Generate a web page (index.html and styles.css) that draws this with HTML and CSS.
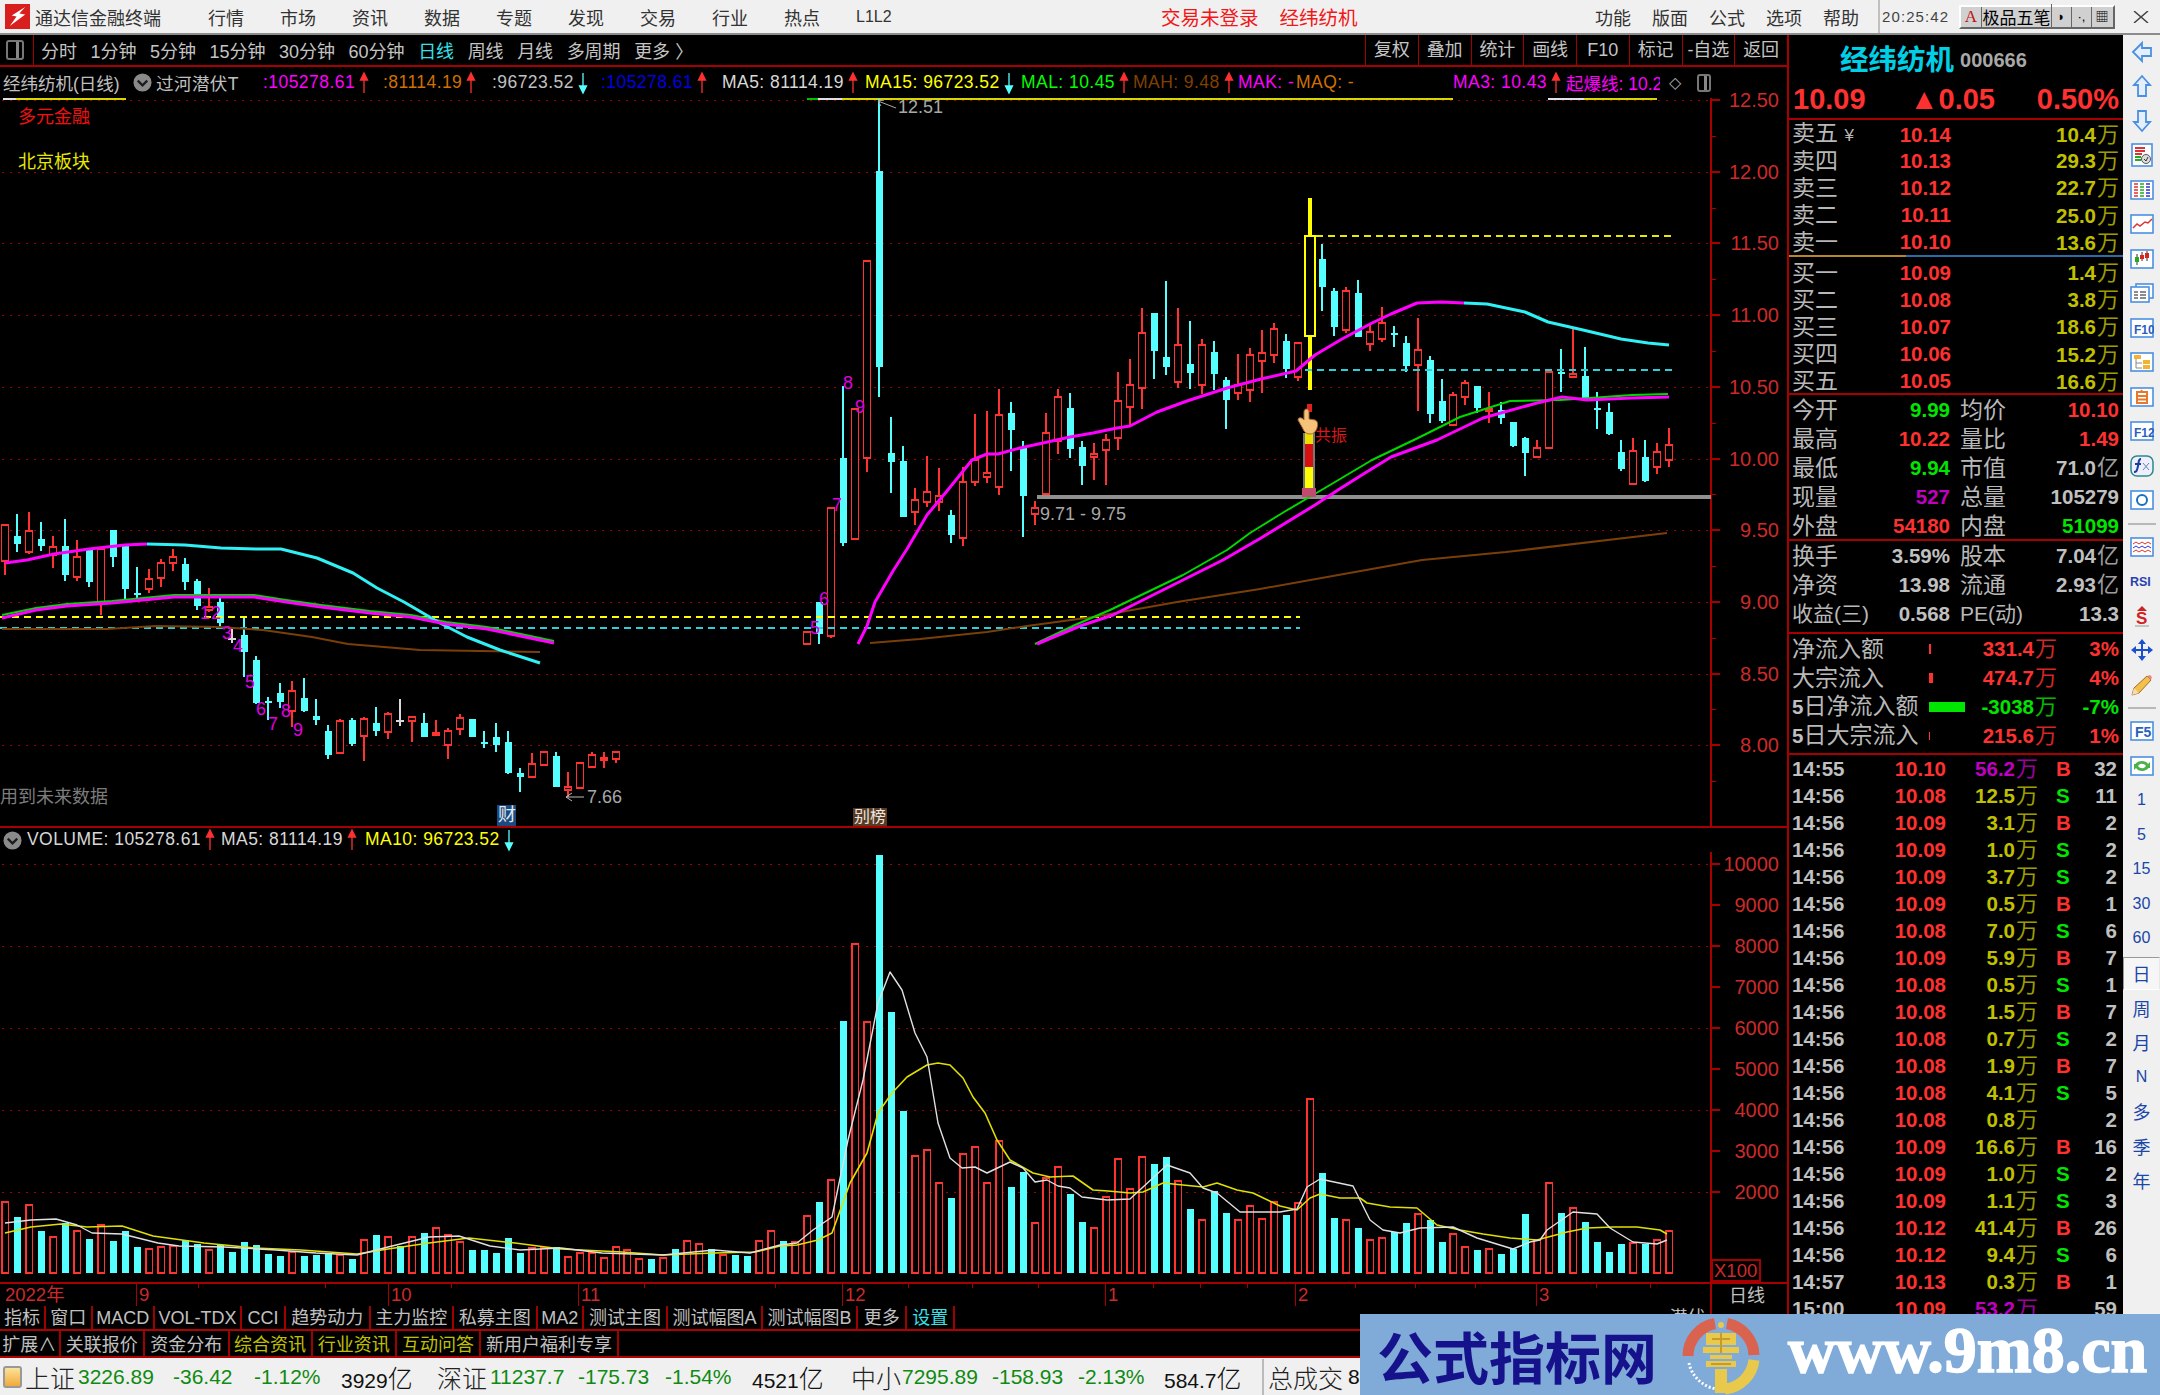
FILE: index.html
```html
<!DOCTYPE html>
<html lang="zh">
<head>
<meta charset="utf-8">
<title>通达信金融终端</title>
<link rel="stylesheet" href="styles.css">
</head>
<body>
<svg class="defs" width="0" height="0">
  <symbol id="up" viewBox="0 0 10 22"><path d="M5 21V3M1.5 8L5 1l3.500 7z" stroke="#ff3030" stroke-width="1.300" fill="#ff3030"/></symbol>
  <symbol id="down" viewBox="0 0 10 22"><path d="M5 1v18M1.500 14L5 21l3.500-7z" stroke="#55ffff" stroke-width="1.300" fill="#55ffff"/></symbol>
  <symbol id="chev" viewBox="0 0 20 20"><circle cx="10" cy="10" r="9.500" fill="#8a8a8a"/><path d="M5 8l5 5 5-5" fill="none" stroke="#1c1c1c" stroke-width="2.400"/></symbol>
</svg>
<div class="app">
  <header class="titlebar">
    <div class="tl-left">
      <svg class="logo" viewBox="0 0 26 26"><rect width="26" height="26" fill="#d91e1e"/><path d="M21 3L7 12l5 1-7 10 16-12-6-1z" fill="#fff"/></svg>
      <span class="brand">通达信金融终端</span>
      <nav class="menu"><span>行情</span><span>市场</span><span>资讯</span><span>数据</span><span>专题</span><span>发现</span><span>交易</span><span>行业</span><span>热点</span><span class="l2">L1L2</span></nav>
    </div>
    <div class="tl-red"><span>交易未登录</span><span>经纬纺机</span></div>
    <nav class="tl-right"><span>功能</span><span>版面</span><span>公式</span><span>选项</span><span>帮助</span></nav>
    <div class="clock">20:25:42</div>
    <div class="ime"><b class="ime-a">A</b><span class="ime-name">极品五笔</span><span class="ime-k">◗</span><span class="ime-k">·,</span><span class="ime-k kb">▦</span></div>
    <svg class="close" viewBox="0 0 16 12"><path d="M1 0l14 12M15 0L1 12" stroke="#444" stroke-width="1.500"/></svg>
  </header>

  <main class="body">
    <section class="left">
      <div class="toolbar">
        <div class="tb-icon"><i></i></div>
        <div class="periods"><span>分时</span><span>1分钟</span><span>5分钟</span><span>15分钟</span><span>30分钟</span><span>60分钟</span><span class="on">日线</span><span>周线</span><span>月线</span><span>多周期</span><span>更多 〉</span></div>
        <div class="tb-btns"><span>复权</span><span>叠加</span><span>统计</span><span>画线</span><span>F10</span><span>标记</span><span>-自选</span><span>返回</span></div>
      </div>
      <div class="legend">
        <span class="gy">经纬纺机(日线)</span>
        <svg class="chev"><use href="#chev"/></svg>
        <span class="gy">过河潜伏T</span>
        <span class="mg">:105278.61<svg class="ar"><use href="#up"/></svg></span>
        <span class="or">:81114.19<svg class="ar"><use href="#up"/></svg></span>
        <span class="gy">:96723.52<svg class="ar"><use href="#down"/></svg></span>
        <span class="bl">:105278.61<svg class="ar"><use href="#up"/></svg></span>
        <span class="wh">MA5: 81114.19<svg class="ar"><use href="#up"/></svg></span>
        <span class="ye">MA15: 96723.52<svg class="ar"><use href="#down"/></svg></span>
        <span class="gr">MAL: 10.45<svg class="ar"><use href="#up"/></svg></span>
        <span class="br">MAH: 9.48<svg class="ar"><use href="#up"/></svg></span>
        <span class="mg">MAK: -</span>
        <span class="or">MAQ: -</span>
        <span class="mg">MA3: 10.43<svg class="ar"><use href="#up"/></svg></span>
        <span class="mg clip">起爆线: 10.2</span>
        <span class="diamond">◇</span>
        <span class="tb-icon small"><i></i></span>
      </div>
      <svg id="price" class="pane pane-price" viewBox="0 98 1787 728"></svg>
      <div class="legend vol-legend">
        <svg class="chev"><use href="#chev"/></svg>
        <span class="wh">VOLUME: 105278.61<svg class="ar"><use href="#up"/></svg></span>
        <span class="wh">MA5: 81114.19<svg class="ar"><use href="#up"/></svg></span>
        <span class="ye">MA10: 96723.52<svg class="ar"><use href="#down"/></svg></span>
        <span></span>
      </div>
      <svg id="vol" class="pane pane-vol" viewBox="0 852 1787 430"></svg>
      <svg id="dates" class="pane pane-dates" viewBox="0 1282 1787 24"></svg>
      <div class="tabs tabs-a">
        <span>指标</span><span>窗口</span><span>MACD</span><span>VOL-TDX</span><span>CCI</span><span>趋势动力</span><span>主力监控</span><span>私募主图</span><span>MA2</span><span>测试主图</span><span>测试幅图A</span><span>测试幅图B</span><span>更多</span><span class="cy">设置</span><span class="blank"></span><span>潜伏</span><span class="blank"></span>
      </div>
      <div class="tabs tabs-b">
        <span>扩展∧</span><span>关联报价</span><span>资金分布</span><span class="ol">综合资讯</span><span class="ol">行业资讯</span><span class="ol">互动问答</span><span>新用户福利专享</span><span class="blank"></span>
      </div>
    </section>

    <aside class="panel">
      <div class="p-head"><span class="p-name">经纬纺机</span><span class="p-code">000666</span></div>
      <div class="p-price"><span>10.09</span><span class="tr">▲0.05</span><span class="tr">0.50%</span></div>
      <div class="book">
        <div class="row"><span class="lb">卖五 <small>¥</small></span><b class="re">10.14</b><b class="ol">10.4<i>万</i></b></div>
        <div class="row"><span class="lb">卖四</span><b class="re">10.13</b><b class="ol">29.3<i>万</i></b></div>
        <div class="row"><span class="lb">卖三</span><b class="re">10.12</b><b class="ol">22.7<i>万</i></b></div>
        <div class="row"><span class="lb">卖二</span><b class="re">10.11</b><b class="ol">25.0<i>万</i></b></div>
        <div class="row"><span class="lb">卖一</span><b class="re">10.10</b><b class="ol">13.6<i>万</i></b></div>
      </div>
      <div class="split"></div>
      <div class="book buy">
        <div class="row"><span class="lb">买一</span><b class="re">10.09</b><b class="ol">1.4<i>万</i></b></div>
        <div class="row"><span class="lb">买二</span><b class="re">10.08</b><b class="ol">3.8<i>万</i></b></div>
        <div class="row"><span class="lb">买三</span><b class="re">10.07</b><b class="ol">18.6<i>万</i></b></div>
        <div class="row"><span class="lb">买四</span><b class="re">10.06</b><b class="ol">15.2<i>万</i></b></div>
        <div class="row"><span class="lb">买五</span><b class="re">10.05</b><b class="ol">16.6<i>万</i></b></div>
      </div>
      <div class="info">
        <div class="irow"><span class="lb">今开</span><b class="gn">9.99</b><span class="lb">均价</span><b class="re">10.10</b></div>
        <div class="irow"><span class="lb">最高</span><b class="re">10.22</b><span class="lb">量比</span><b class="re">1.49</b></div>
        <div class="irow"><span class="lb">最低</span><b class="gn">9.94</b><span class="lb">市值</span><b class="gy">71.0<i>亿</i></b></div>
        <div class="irow"><span class="lb">现量</span><b class="pu">527</b><span class="lb">总量</span><b class="gy">105279</b></div>
        <div class="irow"><span class="lb">外盘</span><b class="re">54180</b><span class="lb">内盘</span><b class="gn">51099</b></div>
      </div>
      <div class="info info-b">
        <div class="irow"><span class="lb">换手</span><b class="gy">3.59%</b><span class="lb">股本</span><b class="gy">7.04<i>亿</i></b></div>
        <div class="irow"><span class="lb">净资</span><b class="gy">13.98</b><span class="lb">流通</span><b class="gy">2.93<i>亿</i></b></div>
        <div class="irow"><span class="lb lb-sm">收益(三)</span><b class="gy">0.568</b><span class="lb lb-sm">PE(动)</span><b class="gy">13.3</b></div>
      </div>
      <div class="flow">
        <div class="frow"><span class="lb">净流入额</span><em class="bar red w2"></em><b class="re">331.4<i>万</i></b><b class="re">3%</b></div>
        <div class="frow"><span class="lb">大宗流入</span><em class="bar red w4"></em><b class="re">474.7<i>万</i></b><b class="re">4%</b></div>
        <div class="frow"><span class="lb"><b class="gy">5</b>日净流入额</span><em class="bar green w36"></em><b class="gn">-3038<i>万</i></b><b class="gn">-7%</b></div>
        <div class="frow"><span class="lb"><b class="gy">5</b>日大宗流入</span><em class="bar red w1"></em><b class="re">215.6<i>万</i></b><b class="re">1%</b></div>
      </div>
      <div class="ticks">
        <div class="tk"><b>14:55</b><b class="re">10.10</b><b class="pu">56.2<i>万</i></b><b class="re">B</b><b>32</b></div>
        <div class="tk"><b>14:56</b><b class="re">10.08</b><b class="ol">12.5<i>万</i></b><b class="gn">S</b><b>11</b></div>
        <div class="tk"><b>14:56</b><b class="re">10.09</b><b class="ol">3.1<i>万</i></b><b class="re">B</b><b>2</b></div>
        <div class="tk"><b>14:56</b><b class="re">10.09</b><b class="ol">1.0<i>万</i></b><b class="gn">S</b><b>2</b></div>
        <div class="tk"><b>14:56</b><b class="re">10.09</b><b class="ol">3.7<i>万</i></b><b class="gn">S</b><b>2</b></div>
        <div class="tk"><b>14:56</b><b class="re">10.09</b><b class="ol">0.5<i>万</i></b><b class="re">B</b><b>1</b></div>
        <div class="tk"><b>14:56</b><b class="re">10.08</b><b class="ol">7.0<i>万</i></b><b class="gn">S</b><b>6</b></div>
        <div class="tk"><b>14:56</b><b class="re">10.09</b><b class="ol">5.9<i>万</i></b><b class="re">B</b><b>7</b></div>
        <div class="tk"><b>14:56</b><b class="re">10.08</b><b class="ol">0.5<i>万</i></b><b class="gn">S</b><b>1</b></div>
        <div class="tk"><b>14:56</b><b class="re">10.08</b><b class="ol">1.5<i>万</i></b><b class="re">B</b><b>7</b></div>
        <div class="tk"><b>14:56</b><b class="re">10.08</b><b class="ol">0.7<i>万</i></b><b class="gn">S</b><b>2</b></div>
        <div class="tk"><b>14:56</b><b class="re">10.08</b><b class="ol">1.9<i>万</i></b><b class="re">B</b><b>7</b></div>
        <div class="tk"><b>14:56</b><b class="re">10.08</b><b class="ol">4.1<i>万</i></b><b class="gn">S</b><b>5</b></div>
        <div class="tk"><b>14:56</b><b class="re">10.08</b><b class="ol">0.8<i>万</i></b><b></b><b>2</b></div>
        <div class="tk"><b>14:56</b><b class="re">10.09</b><b class="ol">16.6<i>万</i></b><b class="re">B</b><b>16</b></div>
        <div class="tk"><b>14:56</b><b class="re">10.09</b><b class="ol">1.0<i>万</i></b><b class="gn">S</b><b>2</b></div>
        <div class="tk"><b>14:56</b><b class="re">10.09</b><b class="ol">1.1<i>万</i></b><b class="gn">S</b><b>3</b></div>
        <div class="tk"><b>14:56</b><b class="re">10.12</b><b class="ol">41.4<i>万</i></b><b class="re">B</b><b>26</b></div>
        <div class="tk"><b>14:56</b><b class="re">10.12</b><b class="ol">9.4<i>万</i></b><b class="gn">S</b><b>6</b></div>
        <div class="tk"><b>14:57</b><b class="re">10.13</b><b class="ol">0.3<i>万</i></b><b class="re">B</b><b>1</b></div>
        <div class="tk"><b>15:00</b><b class="re">10.09</b><b class="pu">53.2<i>万</i></b><b></b><b>59</b></div>
      </div>
    </aside>

    <nav class="side">
      <span class="si"><svg viewBox="0 0 24 24"><path d="M3 12l9-9v5h9v8h-9v5z" class="arw"/></svg></span>
      <span class="si"><svg viewBox="0 0 24 24"><path d="M12 2l8 9h-4v11H8V11H4z" class="arw"/></svg></span>
      <span class="si"><svg viewBox="0 0 24 24"><path d="M12 22l8-9h-4V2H8v11H4z" class="arw"/></svg></span>
      <span class="si"><svg viewBox="0 0 24 24"><rect x="2" y="1" width="20" height="22" class="fr"/><path d="M5 5h10M5 8h10M5 11h7" stroke="#d33" stroke-width="2"/><path d="M5 14h6M5 17h6" stroke="#2a2" stroke-width="2"/><circle cx="16" cy="16" r="4.500" fill="#ddd" stroke="#555"/><path d="M14 16l2 2 2-4" fill="none" stroke="#333"/></svg></span>
      <span class="si"><svg viewBox="0 0 24 24"><rect x="1" y="3" width="22" height="18" class="fr"/><path d="M4 6h4M4 9h4M4 12h4M4 15h4M4 18h4" stroke="#d33" stroke-width="1.500"/><path d="M10 6h4M10 9h4M10 12h4M10 15h4M10 18h4" stroke="#2a2" stroke-width="1.500"/><path d="M16 6h4M16 9h4M16 12h4M16 15h4M16 18h4" stroke="#33c" stroke-width="1.500"/></svg></span>
      <span class="si"><svg viewBox="0 0 24 24"><rect x="1" y="3" width="22" height="18" class="fr"/><path d="M3 16l4-4 3 2 5-4 3 1 4-4" fill="none" stroke="#d33" stroke-width="1.500"/></svg></span>
      <span class="si"><svg viewBox="0 0 24 24"><rect x="1" y="3" width="22" height="18" class="fr"/><path d="M7 7v11M12 5v9M17 4v10" stroke="#333"/><rect x="5" y="10" width="4" height="5" fill="#2a2"/><rect x="10" y="8" width="4" height="4" fill="#d22"/><rect x="15" y="6" width="4" height="5" fill="#d22"/></svg></span>
      <span class="si"><svg viewBox="0 0 24 24"><rect x="6" y="3" width="17" height="14" class="fr"/><rect x="1" y="6" width="18" height="15" class="fr"/><path d="M4 11h4M10 11h6M4 14h4M10 14h6M4 17h4M10 17h6" stroke="#666" stroke-width="1.500"/></svg></span>
      <span class="si"><svg viewBox="0 0 24 24"><rect x="1" y="3" width="22" height="18" class="fr"/><text x="4" y="17.500" class="ict">F10</text></svg></span>
      <span class="si"><svg viewBox="0 0 24 24"><rect x="1" y="3" width="22" height="18" class="fr"/><path d="M6 8v10h6M6 13h6" fill="none" stroke="#888"/><rect x="4" y="5" width="7" height="4" fill="#f2b233"/><rect x="13" y="10" width="7" height="4" fill="#f2b233"/><rect x="13" y="15" width="7" height="4" fill="#f2b233"/></svg></span>
      <span class="si"><svg viewBox="0 0 24 24"><rect x="1" y="3" width="22" height="18" class="fr"/><path d="M7 7h10v11H7zM7 11h10M7 14.500h10M11 7l1-2" fill="none" stroke="#e8782a" stroke-width="2"/></svg></span>
      <span class="si"><svg viewBox="0 0 24 24"><rect x="1" y="3" width="22" height="18" class="fr"/><text x="4" y="17.500" class="ict">F12</text></svg></span>
      <span class="si"><svg viewBox="0 0 24 24"><rect x="1" y="2" width="22" height="20" rx="6" fill="#eef" stroke="#2a8a8a" stroke-width="1.500"/><path d="M11 5c-3 0-2 3-3 7s-1 6-4 6M5 10h6" fill="none" stroke="#1a3fa0" stroke-width="2"/><path d="M13 9l6 7M19 9l-6 7" stroke="#68a" /></svg></span>
      <span class="si"><svg viewBox="0 0 24 24"><rect x="1" y="3" width="22" height="18" class="fr"/><circle cx="12" cy="12" r="5" fill="none" stroke="#1a6fc0" stroke-width="2"/></svg></span>
      <span class="sep"></span>
      <span class="si"><svg viewBox="0 0 24 24"><rect x="1" y="3" width="22" height="18" class="fr"/><path d="M3 9l3-2 3 2 3-2 3 2 3-2 3 2" fill="none" stroke="#d33"/><path d="M3 13l3-2 3 2 3-2 3 2 3-2 3 2" fill="none" stroke="#33c"/><path d="M3 17l3-2 3 2 3-2 3 2 3-2 3 2" fill="none" stroke="#d33"/></svg></span>
      <span class="si"><svg viewBox="0 0 24 24"><text x="0" y="17" class="rsi">RSI</text></svg></span>
      <span class="si"><svg viewBox="0 0 24 24"><path d="M12 2l5 5H7z" fill="#c22"/><text x="6" y="20" class="dollar">S</text><path d="M5 22h14" stroke="#999"/></svg></span>
      <span class="si"><svg viewBox="0 0 24 24"><path d="M12 1l4 5h-3v5h5V8l5 4-5 4v-3h-5v5h3l-4 5-4-5h3v-5H6v3l-5-4 5-4v3h5V6H8z" fill="#1a4fd0"/></svg></span>
      <span class="si"><svg viewBox="0 0 24 24"><path d="M2 22l2-7L17 3l4 4L9 20z" fill="#f2c14a" stroke="#a06a2a"/><path d="M17 3l4 4 1-3-2-2z" fill="#e88"/><path d="M2 22l2-7 5 5z" fill="#f5dcb0"/></svg></span>
      <span class="sep"></span>
      <span class="si"><svg viewBox="0 0 24 24"><rect x="1" y="3" width="22" height="18" class="fr"/><text x="5" y="17.500" class="ict wide">F5</text></svg></span>
      <span class="si"><svg viewBox="0 0 24 24"><rect x="1" y="3" width="22" height="18" class="fr"/><path d="M5 11c1-4 10-6 13-1l2-2v6h-6l2-2c-2-3-7-3-9 0zM19 13c-1 4-10 6-13 1l-2 2v-6h6l-2 2c2 3 7 3 9 0z" fill="#4bb24b"/></svg></span>
      <span class="st">1</span><span class="st">5</span><span class="st">15</span><span class="st">30</span><span class="st">60</span>
      <span class="st cn sel">日</span><span class="st cn">周</span><span class="st cn">月</span><span class="st">N</span><span class="st cn">多</span><span class="st cn">季</span><span class="st cn">年</span>
    </nav>
  </main>

  <footer class="status">
    <i class="st-ico"></i>
    <span class="cn">上证</span><span class="g">3226.89</span><span class="g">-36.42</span><span class="g">-1.12%</span><span class="k">3929<u>亿</u></span>
    <span class="cn">深证</span><span class="g">11237.7</span><span class="g">-175.73</span><span class="g">-1.54%</span><span class="k">4521<u>亿</u></span>
    <span class="cn">中小</span><span class="g">7295.89</span><span class="g">-158.93</span><span class="g">-2.13%</span><span class="k">584.7<u>亿</u></span>
    <span class="cn total">总成交</span><span class="k">8</span>
  </footer>

  <div class="watermark">
    <span class="wm-cn">公式指标网</span>
    <svg class="wm-logo" viewBox="0 0 80 80">
      <path d="M7 41A33 33 0 0 1 34 8.500" fill="none" stroke="#d9634f" stroke-width="11"/>
      <path d="M46 8.500A33 33 0 0 1 73 40" fill="none" stroke="#d9634f" stroke-width="11"/>
      <path d="M73 45A33 33 0 0 1 44 74" fill="none" stroke="#e9c94c" stroke-width="11"/>
      <path d="M8 48A33 33 0 0 0 36 74" fill="none" stroke="#fff" stroke-width="3" stroke-dasharray="2 2"/>
      <circle cx="40" cy="10" r="3" fill="#e9c94c"/>
      <path d="M25 18h30v12H25zM22 32h36v6H22zM29 40h22v4H29zM25 46h30v6H25zM34 54h12v24H34z" fill="#e9c94c"/>
      <path d="M31 24h18M40 18v20M30 49h20" stroke="#c79a2a" stroke-width="2"/>
    </svg>
    <span class="wm-url">www.9m8.cn</span>
  </div>
</div>
<script src="chart.js"></script>
</body>
</html>
```
FILE: styles.css
```css
* { box-sizing: border-box; }
html, body { margin: 0; padding: 0; background: #000; }
body { width: 2160px; height: 1395px; overflow: hidden; font-family: "Liberation Sans", "Noto Sans CJK SC", sans-serif; }
.defs { position: absolute; }
.app { position: relative; width: 2160px; height: 1395px; display: flex; flex-direction: column; }

/* title bar */
.titlebar { height: 35px; flex: none; background: #f0f0f0; border-bottom: 2px solid #8c8c8c; display: grid; grid-template-columns: 1161px 434px 283px 81px 174px 27px; align-items: center; color: #333; font-size: 18px; }
.tl-left { display: flex; align-items: center; }
.logo { width: 25px; height: 25px; margin-left: 5px; flex: none; }
.brand { margin-left: 5px; width: 173px; font-size: 18px; white-space: nowrap; }
.menu { display: flex; align-items: center; gap: 36px; font-size: 18px; color: #333; }
.menu .l2 { font-size: 16px; }
.tl-red { display: flex; gap: 21px; color: #f01818; font-size: 19.500px; white-space: nowrap; }
.tl-right { display: flex; gap: 21px; font-size: 18px; }
.clock { height: 33px; border-left: 2px solid #c0c0c0; padding-left: 2px; display: flex; align-items: center; font-size: 15px; letter-spacing: 1.100px; color: #444; }
.ime { height: 24px; width: 156px; background: #d0d0d0; border: 2px solid; border-color: #fff #666 #666 #fff; display: flex; align-items: center; font-size: 17px; color: #000; }
.ime-a { color: #c01010; width: 21px; text-align: center; font-family: "Liberation Serif", serif; font-weight: 400; border-right: 1px solid #666; }
.ime-name { width: 70px; text-align: center; border-right: 1px solid #666; }
.ime-k { width: 20px; text-align: center; font-size: 13px; line-height: 20px; border-right: 1px solid #666; }
.kb { border-right: 0; }
.close { width: 16px; height: 12px; }

/* layout */
.body { display: flex; height: 1323px; flex: none; background: #000; }
.left { width: 1787px; flex: none; display: flex; flex-direction: column; }
.pane { display: block; width: 1787px; flex: none; overflow: visible; }
.pane-price { height: 728px; }
.pane-vol { height: 430px; }
.pane-dates { height: 24px; }

/* toolbar */
.toolbar { height: 32px; flex: none; border-bottom: 2px solid #a80000; display: grid; grid-template-columns: 34px 1331px 1fr; align-items: center; color: #c4c4c4; font-size: 18px; }
.tb-icon { height: 30px; border-right: 1px solid #a00000; display: flex; align-items: center; justify-content: center; padding-right: 4px; }
.tb-icon i { display: block; width: 18px; height: 20px; border: 2px solid #777; border-radius: 3px; background: linear-gradient(90deg, #000 55%, #888 55%, #888 80%, #000 80%); }
.periods { display: flex; gap: 13.500px; padding-left: 7px; white-space: nowrap; }
.periods .on { color: #38e0e8; }
.tb-btns { display: grid; grid-template-columns: repeat(8, 52.750px); height: 30px; align-items: center; }
.tb-btns span { height: 30px; line-height: 30px; border-left: 1px solid #a00000; text-align: center; white-space: nowrap; }

/* legend rows */
.legend { height: 31px; flex: none; display: grid; grid-template-columns: 130px 23px 107px 120px 109px 109px 121px 143px 156px 112px 105px 58px 157px 113px 103px 28px 14px; padding-left: 3px; align-items: center; font-size: 17.500px; letter-spacing: .45px; white-space: nowrap; width: 1711px; }
.legend > .gy:first-child { letter-spacing: 0; }
.legend .clip { overflow: hidden; width: 94px; letter-spacing: 0; }
.gy { color: #c0c0c0; } .wh { color: #d8d8d8; } .mg { color: #ff00ff; } .or { color: #d07000; } .bl { color: #0000e0; } .ye { color: #ffff00; } .gr { color: #00ff00; } .br { color: #804000; }
.chev { width: 19px; height: 19px; }
.ar { width: 10px; height: 24px; margin-left: 4px; vertical-align: middle; }
.diamond { color: #aaa; font-size: 16px; font-family: "DejaVu Sans", sans-serif; }
.tb-icon.small { border: 0; height: 20px; padding: 0; }
.tb-icon.small i { width: 14px; height: 18px; }
.vol-legend { height: 26px; border-top: 2px solid #a80000; width: 1787px; grid-template-columns: 24px 194px 144px 200px 1fr; padding-left: 3px; }

/* bottom tabs */
.tabs { display: grid; flex: none; width: 1787px; border-bottom: 2px solid #b00000; color: #c0c0c0; font-size: 18px; }
.tabs span { border-right: 2px solid #a00000; text-align: center; white-space: nowrap; overflow: hidden; }
.tabs .blank { border-right: 0; }
.tabs-a { height: 25px; line-height: 24px; grid-template-columns: 46px 46.500px 62.500px 87px 44px 84.500px 83.500px 83.600px 46.400px 84px 95px 95px 49.500px 47.500px 710px 47px 76px; }
.tabs-b { height: 27px; line-height: 28px; grid-template-columns: 60.600px 84.400px 84.600px 83px 84.500px 84px 138px 1fr; }
.tabs .cy { color: #38e0e8; }
.tabs .ol { color: #c0c000; }

/* right panel */
.panel { width: 336px; flex: none; border-left: 2px solid #a80000; display: flex; flex-direction: column; overflow: hidden; color: #c0c0c0; }
.panel i { font-style: normal; font-weight: 400; font-family: "Noto Sans CJK SC", sans-serif; font-size: 22px; line-height: 20px; opacity: .82; margin-left: 1px; }
.panel b { font-size: 20.500px; font-weight: 700; }
.lb { font-size: 23px; color: #b8b8b8; white-space: nowrap; line-height: 26px; letter-spacing: 0; }
.lb small { font-size: 17px; }
.lb-sm { font-size: 21px; }
.re { color: #ff3030; } .ol { color: #c0c000; } .gn { color: #00e600; } .pu { color: #c000c0; } .panel .gy { color: #c0c0c0; }
.p-head { height: 45px; flex: none; display: flex; align-items: center; padding-left: 51px; gap: 6px; }
.p-name { font-size: 28.500px; font-weight: 700; color: #00cfe6; white-space: nowrap; }
.p-code { font-size: 20px; font-weight: 700; color: #a8a8a8; margin-top: 6px; }
.p-price { height: 40px; flex: none; border-bottom: 2px solid #a80000; display: grid; grid-template-columns: 108px 94px 124px; padding-left: 4px; align-items: center; color: #ff3030; font-size: 29px; font-weight: 700; }
.tr { text-align: right; white-space: nowrap; }
.book { height: 135px; flex: none; }
.book.buy { height: 138px; padding-top: 2px; border-bottom: 2px solid #a80000; }
.split { height: 2px; flex: none; background: linear-gradient(90deg, #b8862a 35%, #2a6ca8 35%); }
.row { height: 27.200px; display: grid; grid-template-columns: 86px 73px 168px; padding-left: 3px; align-items: center; }
.row b { text-align: right; white-space: nowrap; }
.info { height: 146px; flex: none; border-bottom: 2px solid #a80000; }
.info-b { height: 93px; }
.irow { height: 29px; display: grid; grid-template-columns: 86px 72px 10px 70px 1fr; padding: 0 4px 0 3px; align-items: center; }
.irow > * { grid-row: 1; }
.irow > :nth-child(1) { grid-column: 1; }
.irow > :nth-child(2) { grid-column: 1 / 3; text-align: right; }
.irow > :nth-child(3) { grid-column: 4; }
.irow > :nth-child(4) { grid-column: 4 / 6; text-align: right; }
.irow b { white-space: nowrap; }
.flow { height: 121px; flex: none; border-bottom: 2px solid #a80000; }
.frow { height: 29px; display: grid; grid-template-columns: 137px 40px 88px 62px; padding-left: 3px; align-items: center; }
.frow b { text-align: right; white-space: nowrap; }
.frow .lb b { font-size: 20.500px; }
.bar { display: block; height: 10px; }
.bar.red { background: #ff3030; }
.bar.green { background: #00e600; }
.w1 { width: 1px; height: 8px; } .w2 { width: 2px; } .w4 { width: 4px; } .w36 { width: 36px; }
.ticks { flex: 1; overflow: hidden; color: #c0c0c0; }
.tk { height: 27px; display: grid; grid-template-columns: 60px 94px 92px 40px 39px; padding-left: 3px; align-items: center; }
.tk b { white-space: nowrap; }
.tk b:nth-child(2), .tk b:nth-child(3), .tk b:nth-child(5) { text-align: right; }
.tk b:nth-child(4) { padding-left: 18px; }

/* side strip */
.side { width: 37px; flex: none; background: #f0f0f0; display: flex; flex-direction: column; align-items: center; }
.si { height: 34.500px; flex: none; display: flex; align-items: center; justify-content: center; }
.si:first-child { height: 34px; }
.si svg { width: 24px; height: 24px; }
.arw { fill: #e4eefc; stroke: #4a90e2; stroke-width: 1.800; }
.fr { fill: #fff; stroke: #4a90e2; stroke-width: 1.600; }
.ict { font: 700 12px "Liberation Sans", sans-serif; fill: #2a5fc0; }
.ict.wide { font-size: 14px; }
.rsi { font: 700 12.500px "Liberation Sans", sans-serif; fill: #2a3fb0; }
.dollar { font: 700 17px "Liberation Sans", sans-serif; fill: #d02020; }
.sep { height: 12px; width: 32px; flex: none; position: relative; }
.sep::after { content: ""; position: absolute; left: 2px; right: 2px; top: 5px; height: 2px; background: #b8b8b8; }
.st { height: 34.500px; width: 100%; flex: none; display: flex; align-items: center; justify-content: center; color: #1a46a8; font-size: 16px; }
.st.cn { font-size: 18px; }
.sel { background: #f6f6f6; border: 1px solid; border-color: #999 #e8e8e8 #fff #999; height: 33px; margin: 1px 0; }

/* status */
.status { height: 37px; flex: none; background: #f0f0f0; display: grid; grid-template-columns: 53px 95px 81px 87px 96px 53px 88px 87px 87px 99px 51px 90px 86px 86px 104px 80px 1fr; padding-left: 25px; align-items: center; position: relative; font-size: 21px; white-space: nowrap; }
.status .cn { font-size: 25px; color: #222; font-weight: 300; }
.status .g { color: #0f8a12; }
.status .k { color: #111; }
.status u { text-decoration: none; font-size: 25px; font-weight: 300; }
.st-ico { position: absolute; left: 3px; top: 8px; width: 19px; height: 22px; border: 2px solid #999; border-radius: 3px; background: linear-gradient(#fbe39a, #f2a93a); }
.total { border-left: 2px solid #bbb; padding-left: 4px; margin-left: -6px; }

/* watermark overlay */
.watermark { position: absolute; left: 1360px; top: 1314px; width: 800px; height: 81px; background: #80aad8; display: flex; align-items: center; padding-left: 17px; overflow: hidden; }
.wm-cn { font-size: 56px; font-weight: 700; color: #16128c; width: 304px; flex: none; line-height: 60px; font-family: "Noto Sans CJK SC", sans-serif; white-space: nowrap; }
.wm-logo { width: 80px; height: 80px; flex: none; }
.wm-url { margin-left: 27px; font-size: 66px; font-weight: 700; color: #fff; font-family: "Liberation Serif", serif; -webkit-text-stroke: 1.500px #fff; white-space: nowrap; line-height: 60px; margin-top: -9px; }

/* svg chart text */
.t-ax { font: 20px "Liberation Sans", sans-serif; fill: #cc2a2a; text-anchor: end; }
.t-gy { font: 18px "Liberation Sans", sans-serif; fill: #a8a8a8; }
.t-cn { font: 18px "Noto Sans CJK SC", sans-serif; }
.t-sm { font: 16px "Noto Sans CJK SC", sans-serif; }
.t-num { font: 18px "Liberation Sans", sans-serif; fill: #e000e0; }
.t-d { font: 18.500px "Liberation Sans", "Noto Sans CJK SC", sans-serif; fill: #cc2a2a; }
.t-day { font: 18px "Noto Sans CJK SC", sans-serif; fill: #c0c0c0; }
```
FILE: chart.js
```javascript
// Daily candles: [bar index, type, high, body top, body bottom, low], in page pixels.
var candles = "0r525,525,561,575|1c514,536,544,552|2r512,531,552,554|3c522,539,546,551|4r536,547,555,568|5c519,546,575,581|6r540,557,577,581|7c548,550,582,587|8r548,549,602,615|9c530,530,557,567|10c545,546,589,600|11c567,593,594,598|12r569,579,589,593|13r559,563,578,587|14r549,557,563,571|15c558,564,582,590|16c579,581,606,610|17r588,607,610,612|18c598,602,623,627|19w628,639,640,643|20c618,635,652,677|21c656,660,703,704|22c697,701,702,720|23c683,693,702,708|24r681,691,711,727|25c678,698,711,712|26c699,716,720,725|27c725,731,755,759|28r719,721,753,753|29c718,720,744,746|30r717,719,736,761|31c707,723,731,736|32r712,714,732,739|33w699,721,721,726|34r716,717,721,742|35c713,723,737,737|36r720,733,735,735|37r728,731,745,759|38r714,718,729,735|39c719,719,737,737|40c731,742,743,748|41c723,737,745,752|42c731,742,773,774|43c768,773,777,792|44r753,764,777,777|45r752,752,765,765|46c752,756,787,787|47r772,787,790,797|48r763,763,788,788|49r752,755,767,767|50r752,758,760,768|51r752,752,759,763|67r632,632,644,644|68c602,602,634,644|69r508,508,636,638|70c386,458,543,546|71r409,409,539,539|72r261,261,458,472|73c99,171,367,397|74c417,453,462,493|75c446,461,517,517|76r488,500,512,525|77r456,492,502,507|78r468,496,502,511|79c510,515,535,543|80r467,482,538,546|81r414,460,482,486|82r411,473,477,483|83r389,415,487,495|84c402,413,430,471|85c441,447,496,537|86r501,508,514,525|87r413,433,494,494|88r389,397,441,454|89c393,408,449,458|90c441,447,466,485|91r443,454,457,480|92r434,440,450,485|93r372,401,438,450|94r359,385,407,425|95r308,333,388,409|96c313,313,351,379|97c281,357,367,375|98r308,345,382,388|99c321,364,373,389|100r339,345,385,394|101c341,352,374,390|102c377,380,400,429|103r354,385,393,400|104r348,355,390,402|105r330,353,361,393|106r323,329,355,363|107c334,341,369,378|108r342,343,377,381|109y198,236,336,390|110c244,259,287,311|111c288,291,327,336|112r287,291,330,333|113c280,293,337,337|114r323,332,344,351|115r307,323,339,342|116c326,333,335,347|117c336,343,366,372|118r318,350,365,411|119c356,360,414,423|120c379,401,421,423|121r392,395,425,426|122r380,383,397,405|123c386,386,408,413|124r392,409,411,423|125c402,410,418,424|126c422,422,446,447|127c437,438,453,476|128r440,448,457,458|129r372,372,448,448|130c349,372,373,392|131r329,374,377,378|132c347,376,398,398|133c392,408,409,429|134c403,412,434,435|135c440,452,469,471|136r438,451,484,484|137c440,457,481,482|138r443,452,467,474|139r428,445,460,467";

// Volume bars: type + top pixel, one per bar index.
var volumes = "r1202 c1217 r1205 c1231 r1237 c1223 r1231 c1239 r1225 c1241 c1231 c1247 r1249 r1247 r1246 c1240 c1244 r1250 c1245 c1252 c1242 c1245 c1254 c1256 r1252 c1256 c1255 c1253 r1255 c1259 r1240 c1235 r1237 c1246 r1237 c1233 r1228 r1235 r1242 c1250 c1250 c1253 c1238 c1253 r1248 r1248 c1247 r1257 r1253 r1253 r1258 r1247 r1250 r1259 c1259 r1258 c1249 r1241 r1244 c1249 r1255 c1255 c1256 r1241 r1231 c1241 r1242 r1216 c1202 r1180 c1021 r944 r1022 c855 c1012 c1111 r1156 r1150 r1183 c1198 r1154 r1147 r1183 r1141 c1187 c1172 r1223 r1178 r1167 c1194 c1222 r1228 r1197 r1159 r1189 r1157 c1164 c1157 r1181 c1209 r1220 c1191 c1213 r1220 r1206 r1219 r1202 c1215 r1203 r1099 c1173 c1218 r1220 c1228 r1240 r1238 c1232 c1223 r1214 c1220 c1242 r1234 r1247 c1250 r1249 c1254 c1249 c1214 r1240 r1183 c1213 r1208 c1222 c1242 c1252 c1244 r1243 c1244 r1240 r1231".split(" ");

var COL = { r: "#ff3232", c: "#55ffff", w: "#d8d8d8", y: "#ffff00" };
var AXIS = "#a80000";

function barX(i) { return Math.round(5 + 11.971 * i); }

function add(svg, name, attrs, text) {
  var n = document.createElementNS("http://www.w3.org/2000/svg", name);
  for (var k in attrs) n.setAttribute(k, attrs[k]);
  if (text !== undefined) n.textContent = text;
  svg.appendChild(n);
  return n;
}
function hline(svg, x1, x2, y, col, w, dash) {
  var a = { x1: x1, x2: x2, y1: y, y2: y, stroke: col, "stroke-width": w || 1, "shape-rendering": "crispEdges" };
  if (dash) a["stroke-dasharray"] = dash;
  return add(svg, "line", a);
}
function vline(svg, x, y1, y2, col, w) {
  return add(svg, "line", { x1: x, x2: x, y1: y1, y2: y2, stroke: col, "stroke-width": w || 1, "shape-rendering": "crispEdges" });
}
function poly(svg, pts, col, w) {
  return add(svg, "polyline", { points: pts, fill: "none", stroke: col, "stroke-width": w, "stroke-linejoin": "round" });
}
function rect(svg, x, y, w, h, attrs) {
  var a = { x: x, y: y, width: w, height: h, "shape-rendering": "crispEdges" };
  for (var k in attrs) a[k] = attrs[k];
  return add(svg, "rect", a);
}
function label(svg, x, y, cls, text, fill) {
  var a = { x: x, y: y, "class": cls };
  if (fill) a.fill = fill;
  return add(svg, "text", a, text);
}

// ---- price pane ----
var P = document.getElementById("price");
function priceY(p) { return 100 + (12.5 - p) * 143.4; }

var labels = ["12.50", "12.00", "11.50", "11.00", "10.50", "10.00", "9.50", "9.00", "8.50", "8.00"];
labels.forEach(function (t, k) {
  var y = Math.round(priceY(12.5 - k * 0.5));
  hline(P, 2, 1711, y, "#a00000", 1, "2 6");
  hline(P, 1711, 1720, y, AXIS, 2);
  hline(P, 1711, 1716, Math.round(priceY(12.25 - k * 0.5)), AXIS, 1);
  label(P, 1779, y + 7, "t-ax", t);
});
vline(P, 1711, 98, 826, AXIS, 2);

// header colour strips drawn by the indicators on the top edge
[[3, 16, "#e0e0e0"], [16, 126, "#d8d800"], [807, 818, "#00c000"], [818, 842, "#e0e0e0"], [842, 1453, "#d8d800"], [1548, 1584, "#e0e0f0"], [1584, 1657, "#d8d800"]].forEach(function (s) {
  hline(P, s[0], s[1], 98.5, s[2], 2);
});

candles.split("|").forEach(function (c) {
  var m = c.match(/^(\d+)([a-z])(.*)$/);
  var v = m[3].split(",").map(Number);
  var x = barX(+m[1]), col = COL[m[2]];
  var hi = v[0], top = v[1], bot = v[2], lo = v[3];
  if (m[2] === "y") {
    vline(P, x, hi, top, col, 4); vline(P, x, bot, lo, col, 4);
    rect(P, x - 5, top, 10, bot - top, { fill: "#000", stroke: col, "stroke-width": 1.5 });
    return;
  }
  vline(P, x, hi, top, col, 1.4); vline(P, x, bot, lo, col, 1.4);
  if (m[2] === "c") rect(P, x - 3.5, top, 7, Math.max(bot - top, 1.5), { fill: col });
  else if (bot - top < 2) hline(P, x - 4, x + 4, top, col, 1.5);
  else rect(P, x - 3.5, top, 7, bot - top, { fill: "#000", stroke: col, "stroke-width": 1.3 });
});

hline(P, 0, 1300, 617, "#ffff00", 2, "7 5");
hline(P, 0, 1300, 628, "#2ad0d8", 2, "7 5");
hline(P, 1316, 1673, 236, "#e8e800", 2, "7 5");
hline(P, 1305, 1673, 370, "#2ad0d8", 2, "7 5");
hline(P, 1037, 1711, 497, "#909090", 4);

var BROWN = "#7a3f08", GREEN = "#00d800", MAG = "#ff00ff", CY = "#2ff0f4";
poly(P, "2,629 107,629 156,626 219,627 263,630 312,637 348,644 420,650 540,652", BROWN, 2);
poly(P, "870,643 920,639 987,632 1027,626 1093,617 1177,602 1260,589 1422,560 1506,552 1667,533", BROWN, 2);
poly(P, "2,615 36,608 67,604 112,601 143,598 174,595 254,595 286,600 321,605 370,611 411,615 446,622 487,627 554,641", GREEN, 2);
poly(P, "1035,644 1075,625 1110,610 1183,575 1227,550 1250,533 1284,512 1330,485 1372,460 1418,438 1460,417 1510,401 1560,400 1590,398 1632,395 1668,394", GREEN, 2);
poly(P, "147,544 185,545 221,548 257,549 281,549 317,558 353,573 377,588 404,602 440,623 467,637 500,650 540,663", CY, 3);
poly(P, "1464,303 1487,304 1525,312 1548,322 1583,330 1621,339 1648,343 1669,345", CY, 3);
poly(P, "5,563 27,560 54,554 89,549 125,545 147,544", MAG, 3);
poly(P, "2,618 36,610 67,606 112,603 143,600 174,597 254,597 286,602 321,607 370,613 411,617 446,624 487,629 554,643", MAG, 3);
poly(P, "858,644 867,626 875,602 893,571 907,549 927,515 947,491 972,460 987,454 998,454 1020,448 1043,443 1070,437 1093,433 1117,428 1130,426 1157,412 1187,401 1227,388 1261,379 1296,371 1315,355 1342,339 1372,323 1391,314 1417,303 1441,302 1464,303", MAG, 3);
poly(P, "1037,644 1080,626 1113,615 1183,580 1223,560 1261,538 1315,505 1338,490 1365,473 1391,457 1437,440 1483,418 1537,403 1562,397 1587,400 1632,398 1669,397", MAG, 3);

// resonance marker below the big candle
vline(P, 1309, 404, 412, "#e02020", 5);
rect(P, 1303, 433, 12, 64, { fill: "#777" });
rect(P, 1305, 433, 8, 11, { fill: "#f0e000" });
rect(P, 1305, 444, 8, 23, { fill: "#d81010" });
rect(P, 1305, 467, 8, 21, { fill: "#ffff00" });
rect(P, 1302, 488, 14, 9, { fill: "#c04a70" });
add(P, "path", { d: "M1304 412c0-4 5-4 5 0v7l6 1c3 1 3 5 2 8-1 3-3 6-7 6-5 0-6-3-8-7l-4-7c0-3 4-3 6 0z", fill: "#f5c27a", stroke: "#a8682a", "stroke-width": 1 });

label(P, 1315, 441, "t-sm", "共振", "#d81818");
label(P, 18, 123, "t-cn", "多元金融", "#f01010");
label(P, 18, 168, "t-cn", "北京板块", "#e8e800");
label(P, 0, 803, "t-cn", "用到未来数据", "#7c7c7c");

rect(P, 497, 805, 19, 21, { fill: "#1a4a80" });
label(P, 498, 821, "t-cn", "财", "#e0e8f0");
rect(P, 853, 808, 34, 18, { fill: "#5a3a20" });
label(P, 854, 822, "t-sm", "别榜", "#e8e8e8");

// local extremes
label(P, 898, 113, "t-gy", "12.51");
add(P, "path", { d: "M878 101l18 7M878 101l6-1M878 101l3 5", stroke: "#aaa", fill: "none" });
label(P, 1040, 520, "t-gy", "9.71 - 9.75");
label(P, 587, 803, "t-gy", "7.66");
add(P, "path", { d: "M566 797h18M566 797l6-4M566 797l6 4", stroke: "#bbb", fill: "none" });

// nine-turn counters
[[200, 619, "1"], [211, 619, "2"], [222, 639, "3"], [233, 652, "4"], [245, 688, "5"], [256, 715, "6"], [268, 730, "7"], [281, 717, "8"], [810, 634, "5"], [819, 605, "6"], [832, 511, "7"], [843, 389, "8"]].forEach(function (n) {
  label(P, n[0], n[1], "t-num", n[2]);
});
label(P, 293, 736, "t-num", "9", "#00e000");
label(P, 855, 413, "t-num", "9", "#00e000");

// ---- volume pane ----
var V = document.getElementById("vol");
[864, 946, 1028, 1110, 1192].forEach(function (y) { hline(V, 2, 1711, y, "#a00000", 1, "2 6"); });
for (var v = 2; v <= 10; v++) {
  var y = Math.round(1274 - v * 41);
  hline(V, 1711, 1720, y, AXIS, 2);
  label(V, 1779, y + 7, "t-ax", v * 1000);
}
vline(V, 1711, 852, 1282, AXIS, 2);

volumes.forEach(function (t, i) {
  var col = COL[t[0]], top = +t.slice(1), x = barX(i);
  if (t[0] === "c") rect(V, x - 3.5, top, 7.5, 1273 - top, { fill: col });
  else rect(V, x - 3, top, 6.5, 1273 - top, { fill: "#000", stroke: col, "stroke-width": 1.3 });
});

poly(V, "5,1233 31,1227 61,1224 87,1227 122,1226 153,1236 204,1243 255,1248 301,1250 357,1254 388,1249 429,1243 469,1238 515,1243 561,1249 622,1252 663,1255 714,1253 755,1252 780,1246 797,1245 818,1240 832,1233 850,1183 867,1153 878,1113 892,1093 907,1077 927,1065 938,1063 950,1065 963,1078 973,1097 985,1113 997,1140 1010,1160 1033,1173 1050,1177 1073,1176 1093,1190 1108,1191 1130,1193 1143,1192 1163,1183 1183,1185 1203,1187 1217,1183 1237,1190 1253,1193 1280,1206 1297,1210 1310,1198 1320,1194 1340,1198 1360,1198 1367,1203 1390,1207 1417,1208 1437,1225 1460,1230 1483,1234 1510,1238 1537,1240 1567,1232 1587,1228 1613,1227 1637,1227 1660,1230 1667,1234", "#e0e000", 1.6);
poly(V, "5,1223 31,1220 56,1219 77,1225 92,1233 122,1234 158,1243 179,1246 224,1247 276,1250 316,1253 357,1255 388,1247 429,1237 459,1236 490,1246 520,1250 561,1248 602,1253 663,1255 714,1250 750,1253 780,1245 797,1243 813,1230 832,1217 848,1140 863,1080 878,1003 890,972 902,990 915,1033 927,1057 938,1123 950,1158 962,1168 975,1167 987,1173 1010,1162 1023,1168 1035,1182 1047,1180 1058,1186 1070,1188 1082,1197 1107,1200 1130,1199 1167,1165 1190,1173 1203,1188 1217,1193 1240,1212 1280,1212 1297,1209 1307,1187 1320,1179 1353,1186 1370,1220 1383,1230 1400,1233 1420,1228 1453,1227 1477,1238 1513,1249 1530,1242 1540,1240 1547,1230 1573,1212 1597,1214 1610,1228 1633,1242 1657,1244 1667,1240", "#e0e0e0", 1.4);

rect(V, 1712, 1260, 48, 21, { fill: "none", stroke: AXIS, "stroke-width": 1.5 });
label(V, 1714, 1277, "t-d", "X100");

// ---- date strip ----
var D = document.getElementById("dates");
hline(D, 0, 1787, 1283, AXIS, 2);
vline(D, 1711, 1282, 1306, AXIS, 2);
[198, 325, 451, 644, 775, 908, 972, 1038, 1153, 1200, 1247, 1355, 1415, 1475, 1596, 1650].forEach(function (x) { if (x < 1711) vline(D, x, 1283, 1288, AXIS, 1); });
[[136, "9"], [388, "10"], [578, "11"], [842, "12"], [1105, "1"], [1295, "2"], [1536, "3"]].forEach(function (m) {
  vline(D, m[0], 1283, 1306, AXIS, 1);
  label(D, m[0] + 3, 1301, "t-d", m[1]);
});
label(D, 5, 1301, "t-d", "2022年");
label(D, 1729, 1302, "t-day", "日线");
```
